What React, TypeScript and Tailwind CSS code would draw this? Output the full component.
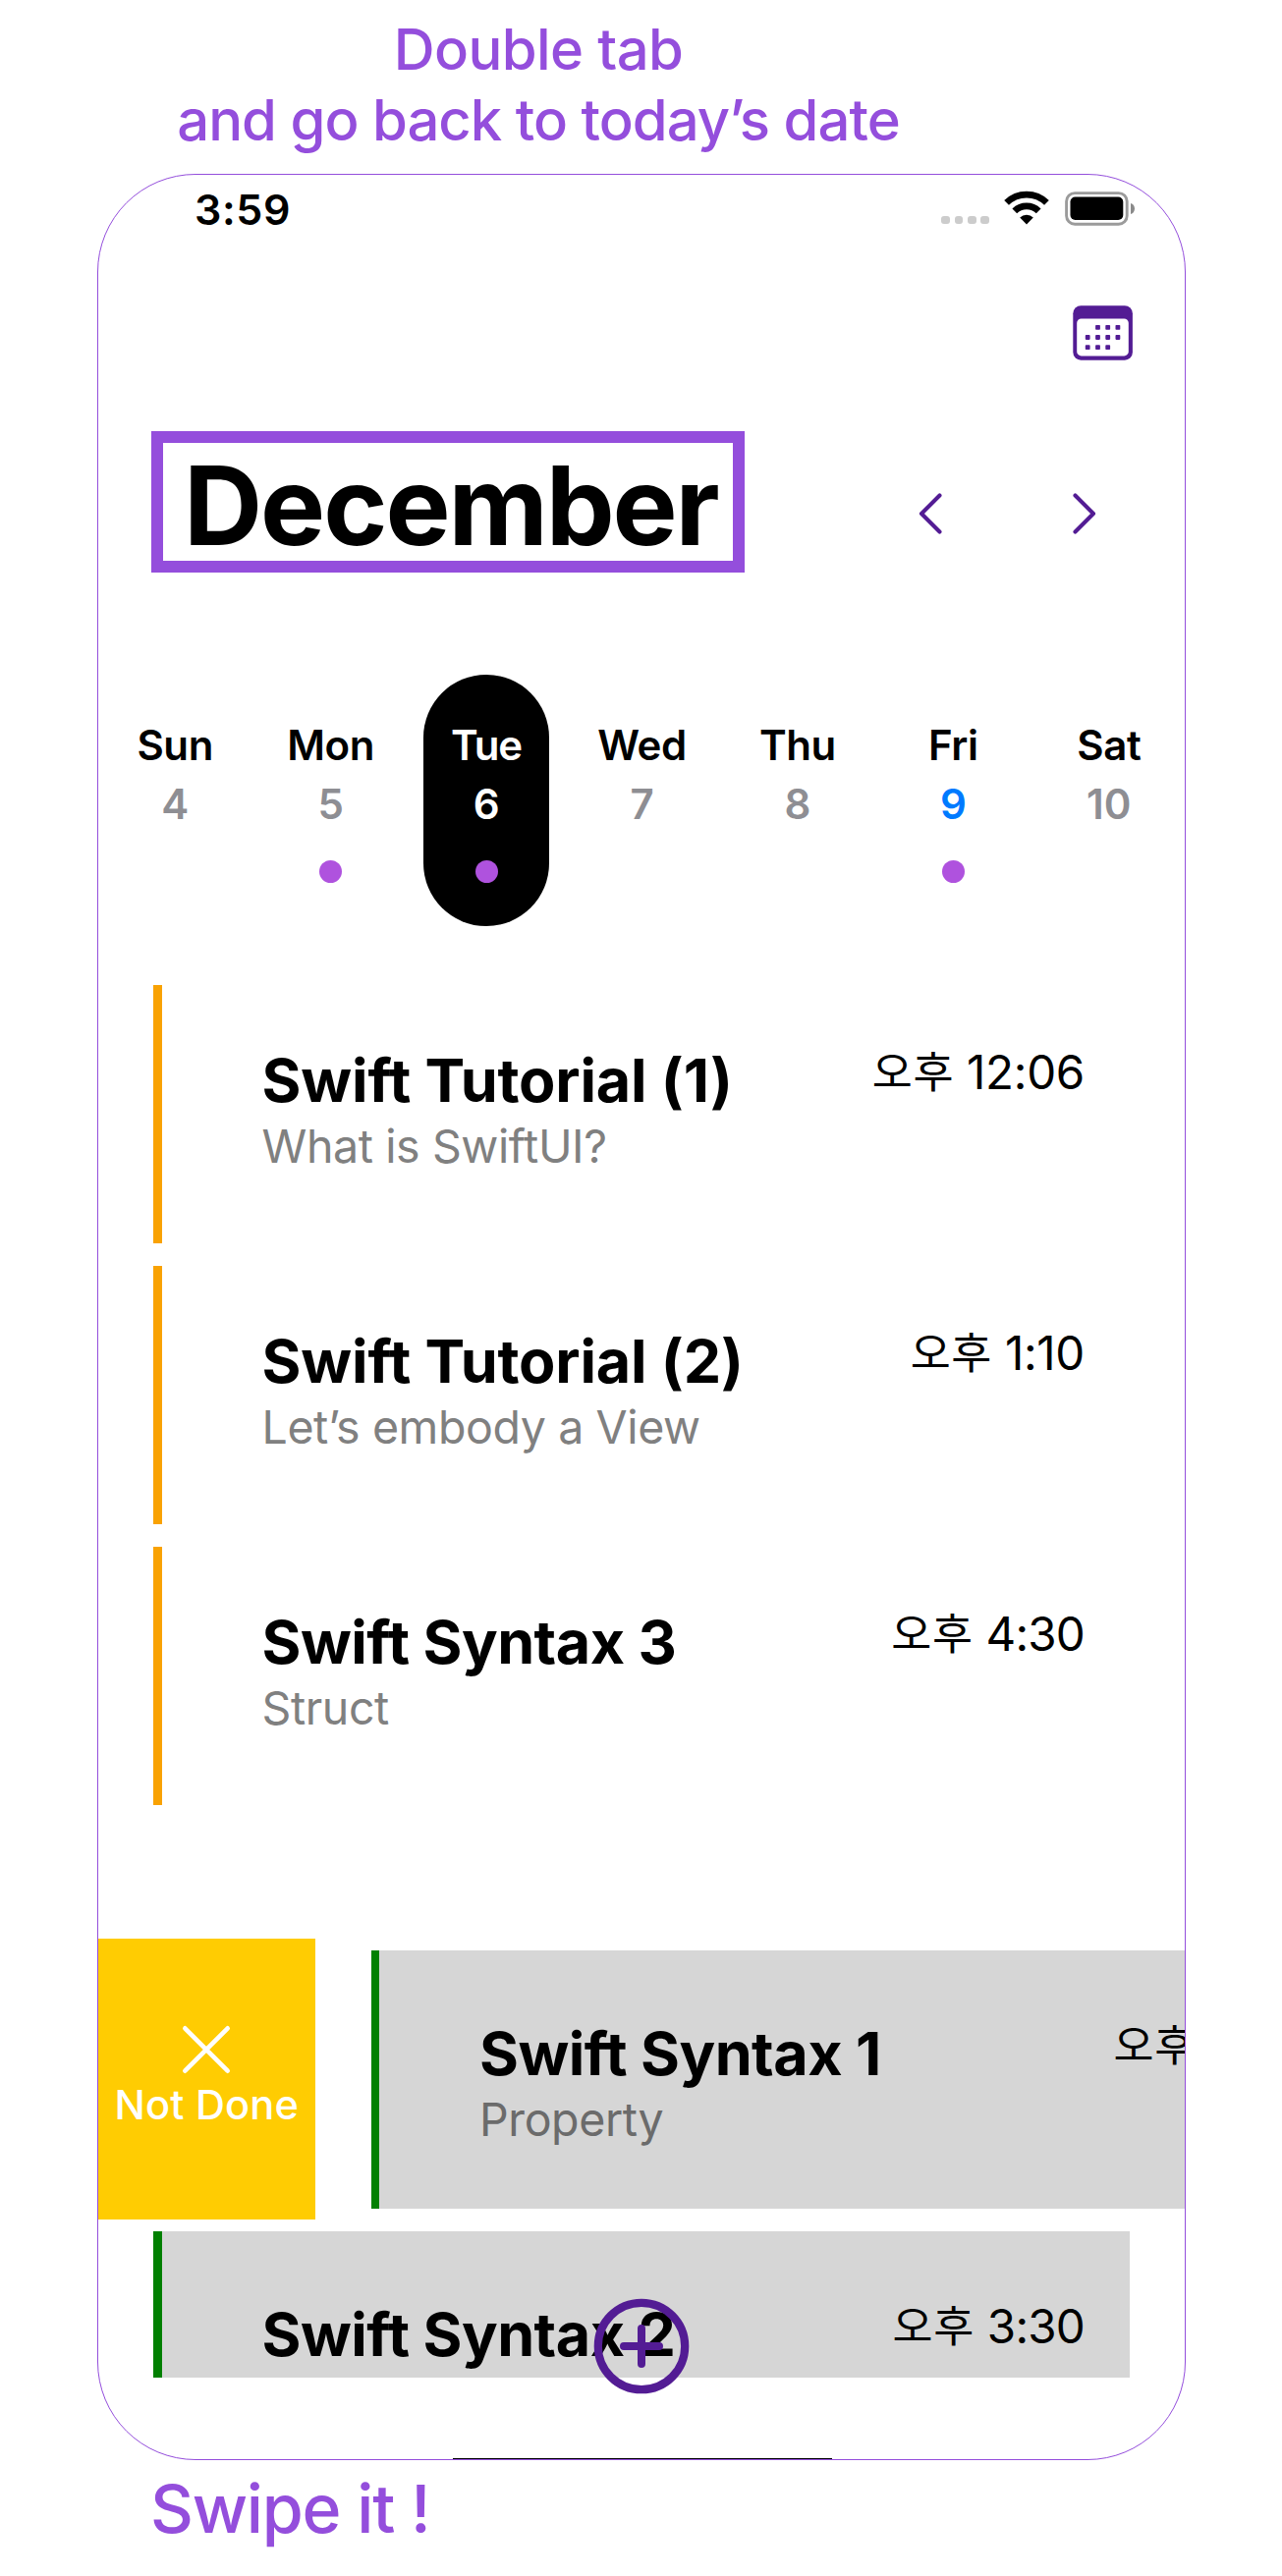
type Day = { name: string; date: string; dot?: boolean; selected?: boolean; today?: boolean };

const days: Day[] = [
  { name: "Sun", date: "4" },
  { name: "Mon", date: "5", dot: true },
  { name: "Tue", date: "6", dot: true, selected: true },
  { name: "Wed", date: "7" },
  { name: "Thu", date: "8" },
  { name: "Fri", date: "9", dot: true, today: true },
  { name: "Sat", date: "10" },
];

type Task = { title: string; note?: string; time?: string };

const openTasks: Task[] = [
  { title: "Swift Tutorial (1)", note: "What is SwiftUI?", time: "12:06" },
  { title: "Swift Tutorial (2)", note: "Let’s embody a View", time: "1:10" },
  { title: "Swift Syntax 3", note: "Struct", time: "4:30" },
];

function Wifi() {
  return (
    <svg width="46" height="35" viewBox="0 0 46 35" fill="none">
      <path d="M2.6 12.4A29.3 29.3 0 0 1 43.4 12.4" stroke="#000" strokeWidth="6.8" />
      <path d="M10.8 20.9A17.4 17.4 0 0 1 35.2 20.9" stroke="#000" strokeWidth="6.8" />
      <path d="M23 34.6L16.2 27.6A9.8 9.8 0 0 1 29.8 27.6Z" fill="#000" />
    </svg>
  );
}

function Battery() {
  return (
    <svg width="72" height="36" viewBox="0 0 72 36" fill="none">
      <rect x="1.6" y="1.6" width="61.6" height="31.6" rx="8.5" stroke="#9b9b9b" strokeWidth="2.9" />
      <rect x="5.5" y="5.6" width="53.8" height="23.4" rx="5" fill="#000" />
      <path d="M67 12c2.6 .8 4 2.9 4 5.5s-1.4 4.700-4 5.500z" fill="#8a8a8a" />
    </svg>
  );
}

const calendarDots = [
  [26, 22.5], [36.2, 22.5], [46.4, 22.5],
  [15.7, 32.6], [26, 32.6], [36.2, 32.6], [46.4, 32.6],
  [15.7, 42.7], [26, 42.7], [36.2, 42.7],
];

function CalendarIcon() {
  return (
    <svg width="61" height="56" viewBox="0 0 61 56">
      <rect x="0.3" y="0.2" width="60.6" height="55.5" rx="8" fill="#531c94" />
      <rect x="4.2" y="13.4" width="52.6" height="38" rx="4.5" fill="#fff" />
      {calendarDots.map(([x, y]) => (
        <rect key={`${x}-${y}`} x={x - 2.9} y={y - 2.5} width="4.8" height="4.8" rx="0.8" fill="#531c94" />
      ))}
    </svg>
  );
}

function Chevron({ right = false }: { right?: boolean }) {
  return (
    <svg width="24" height="42" viewBox="0 0 24 42" fill="none" stroke="#531c94" strokeWidth="4.1" strokeLinecap="round" strokeLinejoin="round">
      <path d={right ? "M2.5 2.5L21 21L2.5 39.5" : "M21.5 2.5L3 21L21.5 39.5"} />
    </svg>
  );
}

function TaskBody({ task, done = false }: { task: Task; done?: boolean }) {
  const tight = task.title.startsWith("Swift Syntax");
  return (
    <div className={`flex min-w-0 grow justify-between pr-[46px] pl-[102px] ${done ? "pt-2" : ""}`}>
      <div className="pt-[64px] whitespace-nowrap">
        <p className={`text-[61px] leading-[66px] font-bold ${tight ? "tracking-[-0.5px]" : "tracking-[-0.15px]"}`}>
          {task.title}
        </p>
        {task.note && (
          <p className={`text-[46.5px] leading-[68px] tracking-[-0.4px] ${done ? "text-[#6b6b6b]" : "text-[#808080]"}`}>
            {task.note}
          </p>
        )}
      </div>
      <p className={`flex gap-[13px] pt-[59px] text-[47.5px] leading-[60px] whitespace-nowrap ${task.time ? "" : "w-[192px]"}`}>
        <span className="text-[44.6px] tracking-[0.6px]">오후</span>
        {task.time && (
          <span className={task.time.startsWith("1") ? "tracking-[-0.3px]" : "tracking-[-0.8px]"}>{task.time}</span>
        )}
      </p>
    </div>
  );
}

export default function App() {
  return (
    <div className="h-[2623px] w-[1305px] overflow-hidden bg-white font-[Inter,'Noto_Sans_CJK_KR',sans-serif] text-black">
      <header className="h-[177px] w-[1096px] pt-[14px] text-center text-[58px] leading-[72px] font-medium text-[#944edc]">
        <p className="tracking-[-0.6px]">Double tab</p>
        <p className="tracking-[-0.98px]">and go back to today’s date</p>
      </header>

      <main className="relative ml-[99px] flex h-[2328px] w-[1108px] flex-col overflow-hidden rounded-[100px] border border-[#944edc]">
        <div className="flex h-[70px] shrink-0 items-center justify-between pr-[50px] pl-[98px]">
          <span className="text-[43px] leading-[70px] font-semibold tracking-[0.6px]">3:59</span>
          <div className="flex items-center">
            <div className="mt-[22px] mr-[15px] flex gap-[4.6px]">
              {[0, 1, 2, 3].map((i) => (
                <span key={i} className="size-[8.7px] rounded-[3px] bg-[#cccccc]" />
              ))}
            </div>
            <div className="-mt-[3px] mr-4">
              <Wifi />
            </div>
            <Battery />
          </div>
        </div>

        <div className="mt-[63px] flex shrink-0 justify-end pr-[53px]">
          <CalendarIcon />
        </div>

        <div className="mt-[72px] flex h-[144px] shrink-0 items-center justify-between pr-[90px] pl-[54px]">
          <h1 className="h-[144px] w-[604px] border-[12px] border-[#944edc] pt-[4px] pl-[21px] text-[111px] leading-[120px] font-bold tracking-[-2.07px] whitespace-nowrap">
            December
          </h1>
          <div className="mt-6 flex gap-[133px]">
            <Chevron />
            <Chevron right />
          </div>
        </div>

        <div className="mt-[104px] -mr-[2px] -ml-[1px] grid h-[256px] shrink-0 grid-cols-7 justify-items-center">
          {days.map((d) => (
            <div
              key={d.name}
              className={`flex w-32 flex-col items-center rounded-full pt-[42px] text-[42px] leading-[60px] font-semibold ${d.selected ? "bg-black text-white" : ""}`}
            >
              <span className={d.name === "Tue" ? "tracking-[-1.1px]" : "tracking-[-0.4px]"}>{d.name}</span>
              <span className={d.selected ? "text-white" : d.today ? "text-[#007aff]" : "text-[#8e8e93]"}>{d.date}</span>
              {d.dot && <span className="mt-[27px] size-[23px] rounded-full bg-[#af52de]" />}
            </div>
          ))}
        </div>

        <div className="mt-[60px] flex shrink-0 flex-col gap-[23px] pr-[56px] pl-[56px]">
          {openTasks.map((t) => (
            <article key={t.title} className="flex h-[263px]">
              <span className="w-[8.5px] shrink-0 bg-[#f9a203]" />
              <TaskBody task={t} />
            </article>
          ))}
        </div>

        <div className="mt-[136px] flex h-[286px] shrink-0">
          <div className="flex w-[220.5px] shrink-0 flex-col items-center bg-[#ffcc02] pt-[88px] text-white">
            <svg width="50" height="50" viewBox="0 0 50 50" fill="none" stroke="currentColor" strokeWidth="4.6" strokeLinecap="round">
              <path d="M3.3 3.3L46.7 46.7M46.700 3.3L3.3 46.7" />
            </svg>
            <span className="mt-px text-[41.5px] leading-[60px] font-medium tracking-[0.2px] whitespace-nowrap">Not Done</span>
          </div>
          <div className="mt-3 ml-[57px] flex h-[263px] w-[994px] shrink-0 bg-[#d6d6d6]">
            <span className="w-[8.5px] shrink-0 bg-[#018001]" />
            <TaskBody task={{ title: "Swift Syntax 1", note: "Property" }} done />
          </div>
        </div>

        <div className="mt-3 mr-[56px] ml-[56px] flex h-[148.5px] shrink-0 overflow-hidden bg-[#d6d6d6]">
          <span className="w-[8.5px] shrink-0 bg-[#018001]" />
          <TaskBody task={{ title: "Swift Syntax 2", time: "3:30" }} done />
        </div>

        <button className="absolute bottom-[66px] left-[504px]" aria-label="Add">
          <svg width="98" height="98" viewBox="0 0 98 98" fill="none" stroke="#531c94" strokeLinecap="round">
            <circle cx="49" cy="49" r="44.2" strokeWidth="8.2" />
            <path d="M49 31V67M31 49H67" strokeWidth="8" />
          </svg>
        </button>
        <div className="absolute bottom-0 left-[361px] h-px w-[386px] bg-black" />
      </main>

      <footer className="pl-[153px] text-[68px] leading-[98px] font-medium tracking-[-1.22px] text-[#944edc]">Swipe it !</footer>
    </div>
  );
}
